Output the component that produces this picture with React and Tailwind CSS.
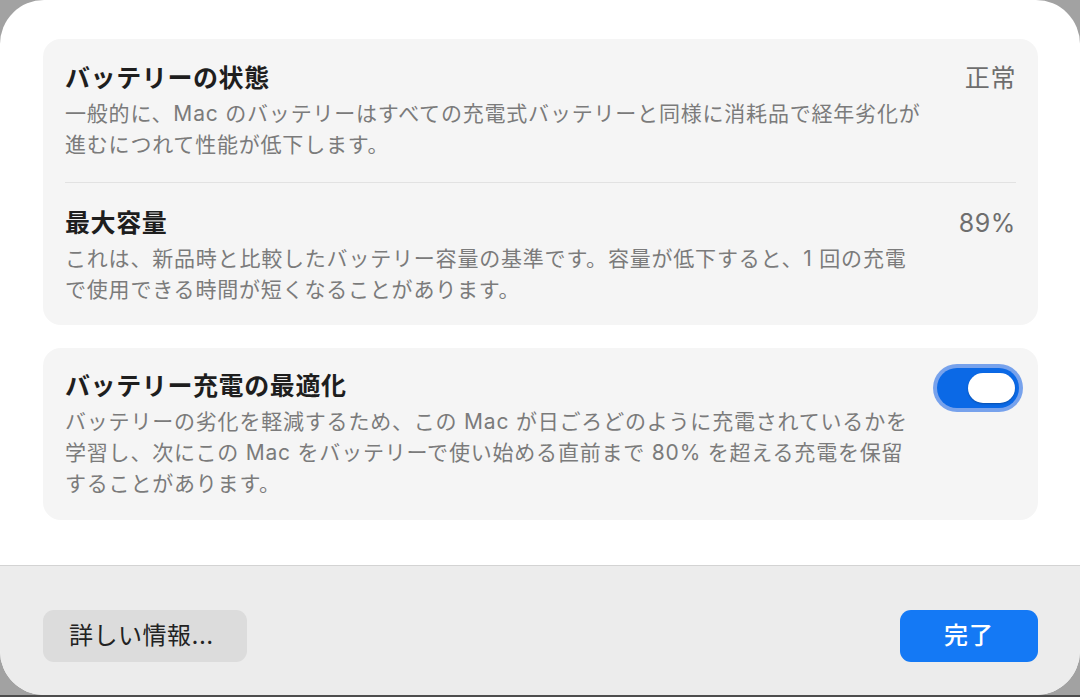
import React from "react";

const FONT = { fontFamily: '"Inter", "Noto Sans CJK JP", sans-serif' };

function Title({ children }) {
  return (
    <div className="text-[25px] leading-[30px] font-semibold tracking-[0.6px] text-[#1e1e1e] whitespace-nowrap">
      {children}
    </div>
  );
}

function Desc({ lines }) {
  return (
    <div className="mt-[5px] text-[21px] leading-[31px] tracking-[0.8px] text-[#7b7b7b]">
      {lines.map((l, i) => (
        <div key={i} className="whitespace-nowrap">
          {l}
        </div>
      ))}
    </div>
  );
}

function Toggle() {
  return (
    <div className="rounded-full bg-[#77a2ec] p-[4px]">
      <div className="flex h-[40px] w-[82px] items-center justify-end rounded-full bg-[#0b69e6] pr-[4px]">
        <div className="h-[30px] w-[47px] rounded-full bg-white shadow-[0_1px_2px_rgba(0,0,0,0.25)]" />
      </div>
    </div>
  );
}

export default function App() {
  return (
    <div className="flex h-[697px] w-[1080px] flex-col bg-[#a2a2a2]" style={FONT}>
      <div className="flex h-[695px] w-full flex-col overflow-hidden rounded-[44px] bg-white">
        <div className="flex flex-1 flex-col gap-[23px] px-[42px] pl-[43px] pt-[39px]">
          <div className="rounded-[18px] bg-[#f5f5f5] px-[22px]">
            <div className="flex justify-between pb-[22px] pt-[24px]">
              <div>
                <Title>バッテリーの状態</Title>
                <Desc
                  lines={[
                    "一般的に、Mac のバッテリーはすべての充電式バッテリーと同様に消耗品で経年劣化が",
                    "進むにつれて性能が低下します。",
                  ]}
                />
              </div>
              <div className="text-[25px] leading-[30px] tracking-[0.6px] text-[#6e6e6e]">正常</div>
            </div>
            <div className="h-px bg-[#e2e2e2]" />
            <div className="flex justify-between pb-[20px] pt-[25px]">
              <div>
                <Title>最大容量</Title>
                <Desc
                  lines={[
                    "これは、新品時と比較したバッテリー容量の基準です。容量が低下すると、1 回の充電",
                    "で使用できる時間が短くなることがあります。",
                  ]}
                />
              </div>
              <div className="text-[25px] leading-[30px] tracking-[0.6px] text-[#6e6e6e]">89%</div>
            </div>
          </div>

          <div className="flex justify-between rounded-[18px] bg-[#f5f5f5] pb-[21px] pl-[22px] pr-[15px] pt-[23px]">
            <div>
              <Title>バッテリー充電の最適化</Title>
              <Desc
                lines={[
                  "バッテリーの劣化を軽減するため、この Mac が日ごろどのように充電されているかを",
                  "学習し、次にこの Mac をバッテリーで使い始める直前まで 80% を超える充電を保留",
                  "することがあります。",
                ]}
              />
            </div>
            <div className="-mt-[7px]">
              <Toggle />
            </div>
          </div>
        </div>

        <div className="flex h-[130px] items-start justify-between border-t border-[#d3d3d3] bg-[#ececec] pl-[43px] pr-[42px] pt-[44px]">
          <button className="flex h-[52px] w-[204px] items-center rounded-[11px] bg-[#dcdcdc] pl-[26px] text-[24px] tracking-[0.5px] text-[#222222]">
            詳しい情報...
          </button>
          <button className="flex h-[52px] w-[138px] items-center justify-center rounded-[11px] bg-[#1479f5] text-[24px] font-medium tracking-[1px] text-white">
            完了
          </button>
        </div>
      </div>
      <div className="h-[2px] bg-[#4d4d4d]" />
    </div>
  );
}
